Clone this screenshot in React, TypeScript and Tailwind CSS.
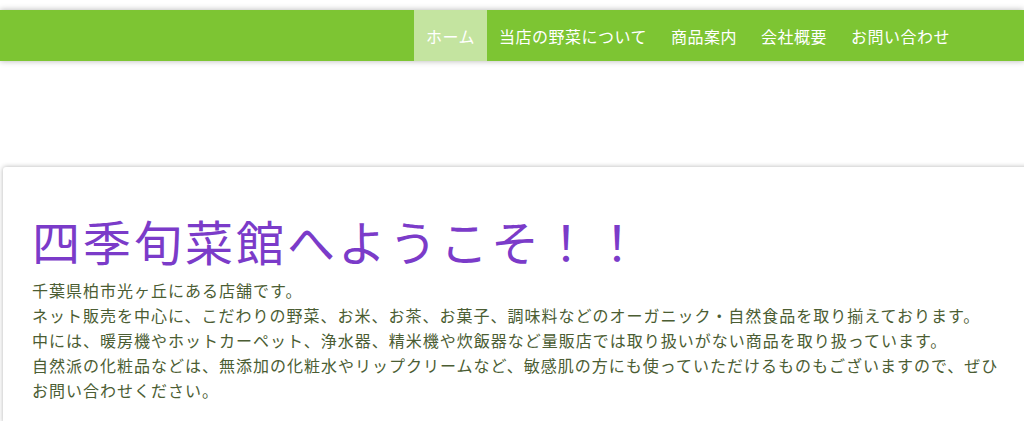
const NAV_ITEMS = [
  { label: 'ホーム', active: true },
  { label: '当店の野菜について', active: false },
  { label: '商品案内', active: false },
  { label: '会社概要', active: false },
  { label: 'お問い合わせ', active: false },
];

const LINES = [
  '千葉県柏市光ヶ丘にある店舗です。',
  'ネット販売を中心に、こだわりの野菜、お米、お茶、お菓子、調味料などのオーガニック・自然食品を取り揃えております。',
  '中には、暖房機やホットカーペット、浄水器、精米機や炊飯器など量販店では取り扱いがない商品を取り扱っています。',
  '自然派の化粧品などは、無添加の化粧水やリップクリームなど、敏感肌の方にも使っていただけるものもございますので、ぜひ',
  'お問い合わせください。',
];

export default function App() {
  return (
    <div
      className="w-[1024px] h-[421px] overflow-hidden bg-white"
      style={{ fontFamily: "'Noto Sans CJK JP', 'Noto Sans', sans-serif" }}
    >
      {/* ── Header nav ── */}
      <div className="pt-[10px]">
        <nav className="h-[51px] bg-[#7dc533] shadow-[0_0_6px_rgba(0,0,0,0.3)] flex justify-end pr-[62px]">
          {NAV_ITEMS.map((item) => (
            <a
              key={item.label}
              className={
                item.active
                  ? 'flex items-center px-3 h-full bg-[#c4e4a0] text-white text-[16px] tracking-[0.5px]'
                  : 'flex items-center px-3 h-full text-white text-[16px] tracking-[0.5px]'
              }
            >
              {item.label}
            </a>
          ))}
        </nav>
      </div>

      {/* ── Main card ── */}
      <div className="mt-[106px] ml-[3px] w-[1040px] bg-white rounded-tl-[3px] shadow-[0_0_5px_rgba(0,0,0,0.3)] pl-[29px] pt-[38px] pb-[20px]">
        <h1 className="text-[48px] leading-[70px] tracking-[3px] text-[#7b3bc9]">
          四季旬菜館へようこそ！！
        </h1>
        <div className="text-[16px] leading-[25px] tracking-[1px] text-[#4b5d33] mt-[3px]">
          {LINES.map((line, i) => (
            <p key={i}>{line}</p>
          ))}
        </div>
      </div>
    </div>
  );
}
